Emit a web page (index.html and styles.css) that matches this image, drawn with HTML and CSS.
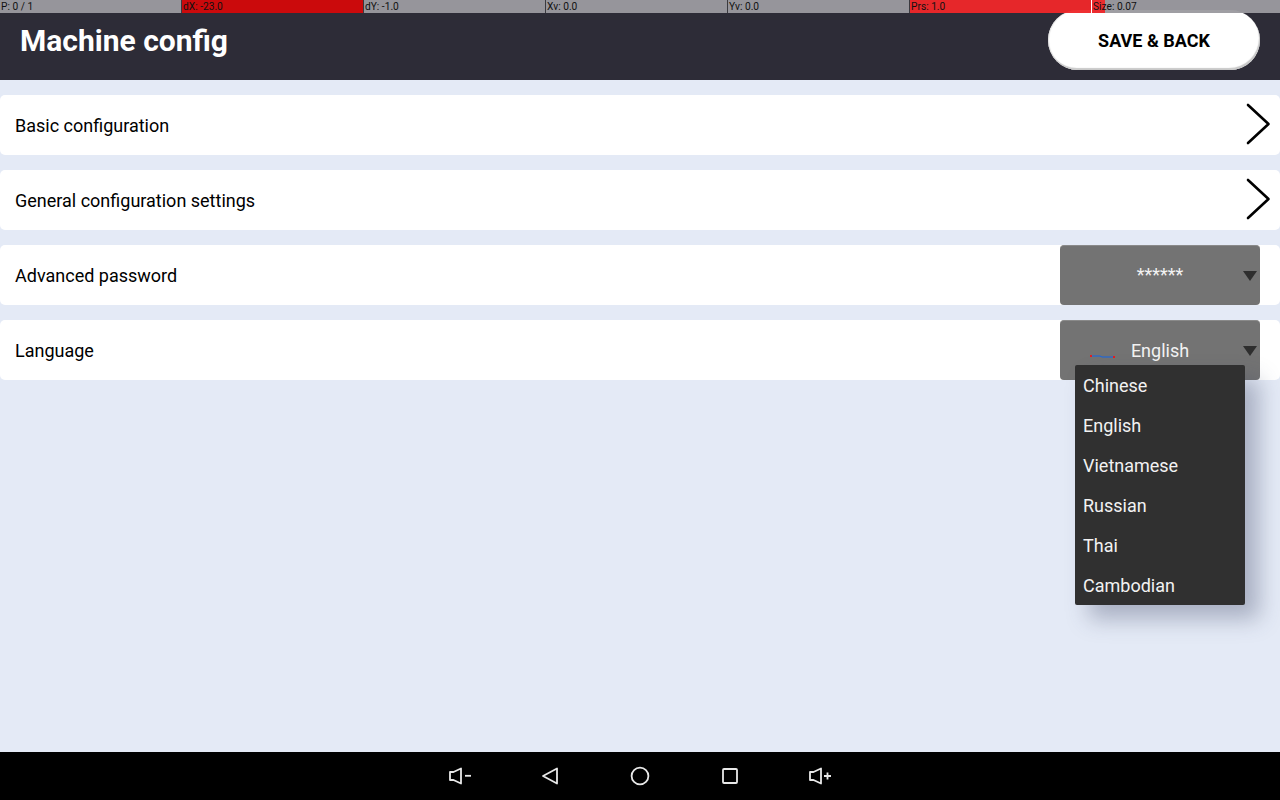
FILE: index.html
```html
<!DOCTYPE html>
<html lang="en">

<head>
    <meta charset="UTF-8">
    <meta name="viewport" content="width=device-width, initial-scale=1.0">
    <title>Machine config</title>
    <link rel="stylesheet" href="styles.css">
</head>

<body>
    <div class="screen">
        <header class="topbar">
            <h1>Machine config</h1>
            <button class="save-btn">SAVE &amp; BACK</button>
        </header>

        <main class="settings">
            <div class="row">
                <span>Basic configuration</span>
                <svg class="chevron" width="26" height="44" viewBox="0 0 26 44">
                    <path d="M2 3 L22.5 22 L2 41" />
                </svg>
            </div>
            <div class="row">
                <span>General configuration settings</span>
                <svg class="chevron" width="26" height="44" viewBox="0 0 26 44">
                    <path d="M2 3 L22.5 22 L2 41" />
                </svg>
            </div>
            <div class="row">
                <span>Advanced password</span>
                <div class="select">
                    <span class="select-value password">******</span>
                    <span class="caret"></span>
                </div>
            </div>
            <div class="row">
                <span>Language</span>
                <div class="select">
                    <svg class="trace" width="30" height="6" viewBox="0 0 30 6">
                        <path class="trace-line" d="M2 2 H11 L13 3 H24" />
                        <rect class="trace-dot" x="1" y="1" width="2" height="2" />
                        <rect class="trace-dot" x="24" y="2" width="2" height="2" />
                    </svg>
                    <span class="select-value">English</span>
                    <span class="caret"></span>
                </div>
            </div>
        </main>

        <ul class="menu">
            <li>Chinese</li>
            <li>English</li>
            <li>Vietnamese</li>
            <li>Russian</li>
            <li>Thai</li>
            <li>Cambodian</li>
        </ul>

        <!-- pointer location overlay -->
        <div class="pointer-bar">
            <div class="cell">P: 0 / 1</div>
            <div class="cell red-dark">dX: -23.0</div>
            <div class="cell">dY: -1.0</div>
            <div class="cell">Xv: 0.0</div>
            <div class="cell">Yv: 0.0</div>
            <div class="cell red-light">Prs: 1.0</div>
            <div class="cell cell-last"><span class="size-fill"></span><span class="size-text">Size: 0.07</span></div>
        </div>

        <nav class="navbar">
            <svg width="24" height="20" viewBox="0 0 24 20">
                <path d="M2 6 H5.5 L13 2.5 V17.5 L5.5 14 H2 Z" />
                <path d="M17 9.8 H23" />
            </svg>
            <svg width="24" height="20" viewBox="0 0 24 20">
                <path d="M19 2.5 V17.5 L5 10 Z" />
            </svg>
            <svg width="24" height="20" viewBox="0 0 24 20">
                <circle cx="12" cy="10" r="8.4" />
            </svg>
            <svg width="24" height="20" viewBox="0 0 24 20">
                <rect x="5" y="3" width="14" height="14" rx="1" />
            </svg>
            <svg width="24" height="20" viewBox="0 0 24 20">
                <path d="M2 6 H5.5 L13 2.5 V17.5 L5.5 14 H2 Z" />
                <path d="M16 10 H23 M19.5 6.5 V13.5" />
            </svg>
        </nav>
    </div>
</body>

</html>
```

FILE: styles.css
```css
* {
    box-sizing: border-box;
}

body {
    margin: 0;
    font-family: Roboto, sans-serif;
    background-color: #e4eaf6;
}

.screen {
    position: relative;
    width: 1280px;
    height: 800px;
    overflow: hidden;
    display: flex;
    flex-direction: column;
}

.topbar {
    height: 80px;
    flex-shrink: 0;
    padding: 0 20px;
    display: flex;
    align-items: center;
    justify-content: space-between;
    background: #2d2c37;
}

.topbar h1 {
    margin: 0;
    font-size: 30px;
    font-weight: 700;
    color: white;
}

.save-btn {
    width: 212px;
    height: 60px;
    border: none;
    border-radius: 30px;
    background: white;
    box-shadow: inset -1px -2px 1px #c8c8c8, inset 1px 0 1px #e0e0e0;
    font-family: Roboto, sans-serif;
    font-size: 18px;
    font-weight: 700;
    color: black;
    cursor: pointer;
}

.settings {
    flex: 1;
    padding-top: 15px;
    display: flex;
    flex-direction: column;
    gap: 15px;
}

.row {
    height: 60px;
    padding-left: 15px;
    display: flex;
    align-items: center;
    justify-content: space-between;
    background: white;
    border-radius: 5px;
    font-size: 18px;
    color: black;
}

.chevron {
    margin-right: 8px;
    margin-top: -3px;
}

.chevron path {
    fill: none;
    stroke: black;
    stroke-width: 2.6;
    stroke-linecap: round;
    stroke-linejoin: round;
}

.select {
    position: relative;
    width: 200px;
    height: 60px;
    margin-right: 20px;
    display: flex;
    align-items: center;
    justify-content: center;
    background: #737373;
    border-top: 1px solid #8a8a8a;
    border-radius: 4px;
    color: #f2f2f2;
}

.password {
    margin-top: -2px;
}

.trace {
    position: absolute;
    left: 29px;
    top: 33px;
}

.trace-line {
    fill: none;
    stroke: #1466e8;
    stroke-width: 1;
}

.trace-dot {
    fill: #e81c1c;
}

.caret {
    position: absolute;
    right: 3px;
    top: 25px;
    border-left: 7px solid transparent;
    border-right: 7px solid transparent;
    border-top: 10px solid #2e2e2e;
}

.menu {
    position: absolute;
    left: 1075px;
    top: 365px;
    width: 170px;
    height: 240px;
    margin: 0;
    padding: 0;
    list-style: none;
    background: #303030;
    border-radius: 2px;
    box-shadow: 14px 14px 22px rgba(60, 70, 100, 0.35);
    color: #f2f2f2;
    font-size: 18px;
}

.menu li {
    height: 40px;
    padding: 1px 0 0 8px;
    line-height: 40px;
}

.pointer-bar {
    position: absolute;
    left: 0;
    top: 0;
    width: 1280px;
    height: 13px;
    display: grid;
    grid-template-columns: 181px repeat(5, 182px) 189px;
    font-size: 10.2px;
    line-height: 13px;
    color: #111;
}

.cell {
    position: relative;
    padding-left: 1px;
    background: rgba(155, 154, 159, 0.96);
    border-left: 1px solid #3a3a40;
    white-space: nowrap;
}

.cell:first-child {
    border-left: none;
}

.red-dark {
    background: #cb0a0c;
}

.red-light {
    background: rgba(238, 40, 42, 0.96);
}

.cell-last {
    border-left: 1px solid white;
}

.size-fill {
    position: absolute;
    left: 0;
    top: 0;
    width: 13px;
    height: 13px;
    background: rgba(238, 40, 42, 0.96);
}

.size-text {
    position: relative;
}

.navbar {
    height: 48px;
    flex-shrink: 0;
    display: flex;
    align-items: center;
    justify-content: center;
    gap: 66px;
    background: black;
}

.navbar svg {
    fill: none;
    stroke: #e8e8e8;
    stroke-width: 1.8;
    stroke-linejoin: round;
}
```
